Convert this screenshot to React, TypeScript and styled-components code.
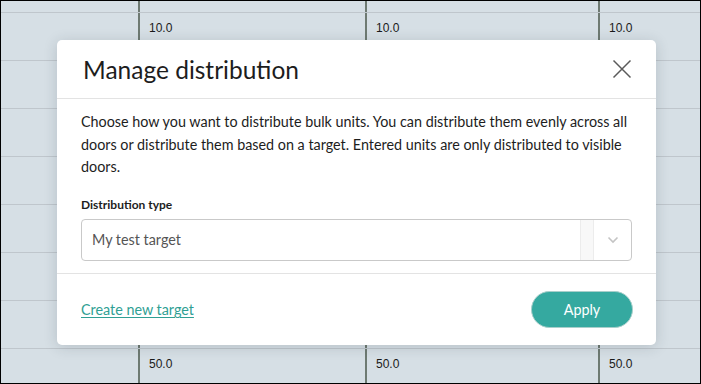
import React from "react";
import styled, { createGlobalStyle } from "styled-components";

const Global = createGlobalStyle`
  html, body { margin: 0; padding: 0; }
  body { font-family: Lato, "Open Sans", sans-serif; }
  * { box-sizing: border-box; }
`;

const Frame = styled.div`
  position: relative;
  width: 701px;
  height: 384px;
  overflow: hidden;
  border: 1px solid #000;
  background: #d6dfe5;
`;

const Grid = styled.div`
  display: flex;
  flex-direction: column;
  margin-top: -36px;
`;

const Row = styled.div`
  display: grid;
  grid-template-columns: 137px 227px 233px 1fr;
  height: 48px;
  border-bottom: 1px solid #bfc6cc;
`;

const Cell = styled.div<{ $divider?: boolean }>`
  padding: 8px 0 0 9px;
  font-family: "Liberation Sans", Arial, sans-serif;
  font-size: 12px;
  color: #1a1a1a;
  border-left: ${(p) => (p.$divider ? "2px solid #6e7a72" : "none")};
`;

const Overlay = styled.div`
  position: absolute;
  left: 56px;
  top: 39px;
  width: 599px;
  height: 305px;
  background: #fff;
  border-radius: 5px;
  box-shadow: 0 2px 14px rgba(40, 50, 60, 0.18);
  display: flex;
  flex-direction: column;
`;

const Header = styled.div`
  display: flex;
  align-items: center;
  justify-content: space-between;
  height: 59px;
  padding: 0 23px 0 26px;
  border-bottom: 1px solid #e3e3e3;
`;

const Title = styled.h2`
  margin: 0;
  padding-top: 1px;
  font-family: Lato, sans-serif;
  font-weight: 400;
  font-size: 24.5px;
  color: #1d1d1d;
`;

const CloseBtn = styled.button`
  border: none;
  background: none;
  padding: 0;
  width: 22px;
  height: 22px;
  display: flex;
  align-items: center;
  justify-content: center;
  cursor: pointer;
`;

const Body = styled.div`
  flex: 1;
  padding: 12px 24px 0 24px;
  border-bottom: 1px solid #e3e3e3;
`;

const Text = styled.p`
  margin: 0;
  font-size: 14.35px;
  line-height: 22.5px;
  color: #1d1d1d;
`;

const Label = styled.div`
  margin-top: 18px;
  font-size: 12px;
  font-weight: 700;
  color: #1d1d1d;
`;

const Select = styled.div`
  margin-top: 7px;
  height: 42px;
  border: 1px solid #c9c9c9;
  border-radius: 4px;
  display: flex;
  align-items: stretch;
`;

const Value = styled.div`
  flex: 1;
  display: flex;
  align-items: center;
  padding-left: 10px;
  font-size: 14.35px;
  color: #555;
`;

const Sep = styled.div`
  width: 14px;
  background: #f8f8f8;
  border-left: 1px solid #ececec;
  border-right: 1px solid #ececec;
`;

const Indicator = styled.div`
  width: 37px;
  display: flex;
  align-items: center;
  justify-content: center;
`;

const Footer = styled.div`
  height: 71px;
  display: flex;
  align-items: center;
  justify-content: space-between;
  padding: 0 23px 0 24px;
`;

const Link = styled.a`
  font-size: 14.35px;
  color: #2f9f94;
  text-decoration: underline;
  text-underline-offset: 2px;
  cursor: pointer;
`;

const Apply = styled.button`
  width: 102px;
  height: 37px;
  border-radius: 19px;
  border: 1px solid #a9cfcb;
  background: #35a9a0;
  color: #fff;
  font-family: Lato, sans-serif;
  font-size: 14.35px;
  cursor: pointer;
`;

const rows = [
  ["", "", "", ""],
  ["", "10.0", "10.0", "10.0"],
  ["", "", "", ""],
  ["", "", "", ""],
  ["", "", "", ""],
  ["", "", "", ""],
  ["", "", "", ""],
  ["", "", "", ""],
  ["", "50.0", "50.0", "50.0"],
];

export default function App() {
  return (
    <>
      <Global />
      <Frame>
        <Grid>
          {rows.map((r, i) => (
            <Row key={i}>
              {r.map((c, j) => (
                <Cell key={j} $divider={j > 0}>
                  {c}
                </Cell>
              ))}
            </Row>
          ))}
        </Grid>
        <Overlay>
          <Header>
            <Title>Manage distribution</Title>
            <CloseBtn aria-label="Close">
              <svg width="20" height="20" viewBox="0 0 20 20">
                <path d="M1.5 1.5 L18.5 18.5 M18.5 1.5 L1.5 18.5" stroke="#5a5a5a" strokeWidth="1.5" fill="none" />
              </svg>
            </CloseBtn>
          </Header>
          <Body>
            <Text>
              Choose how you want to distribute bulk units. You can distribute them evenly across all
              doors or distribute them based on a target. Entered units are only distributed to visible
              doors.
            </Text>
            <Label>Distribution type</Label>
            <Select>
              <Value>My test target</Value>
              <Sep />
              <Indicator>
                <svg width="12" height="8" viewBox="0 0 12 8">
                  <path d="M1.5 1.5 L6 6 L10.5 1.5" stroke="#c4c4c4" strokeWidth="1.6" fill="none" />
                </svg>
              </Indicator>
            </Select>
          </Body>
          <Footer>
            <Link>Create new target</Link>
            <Apply>Apply</Apply>
          </Footer>
        </Overlay>
      </Frame>
    </>
  );
}
